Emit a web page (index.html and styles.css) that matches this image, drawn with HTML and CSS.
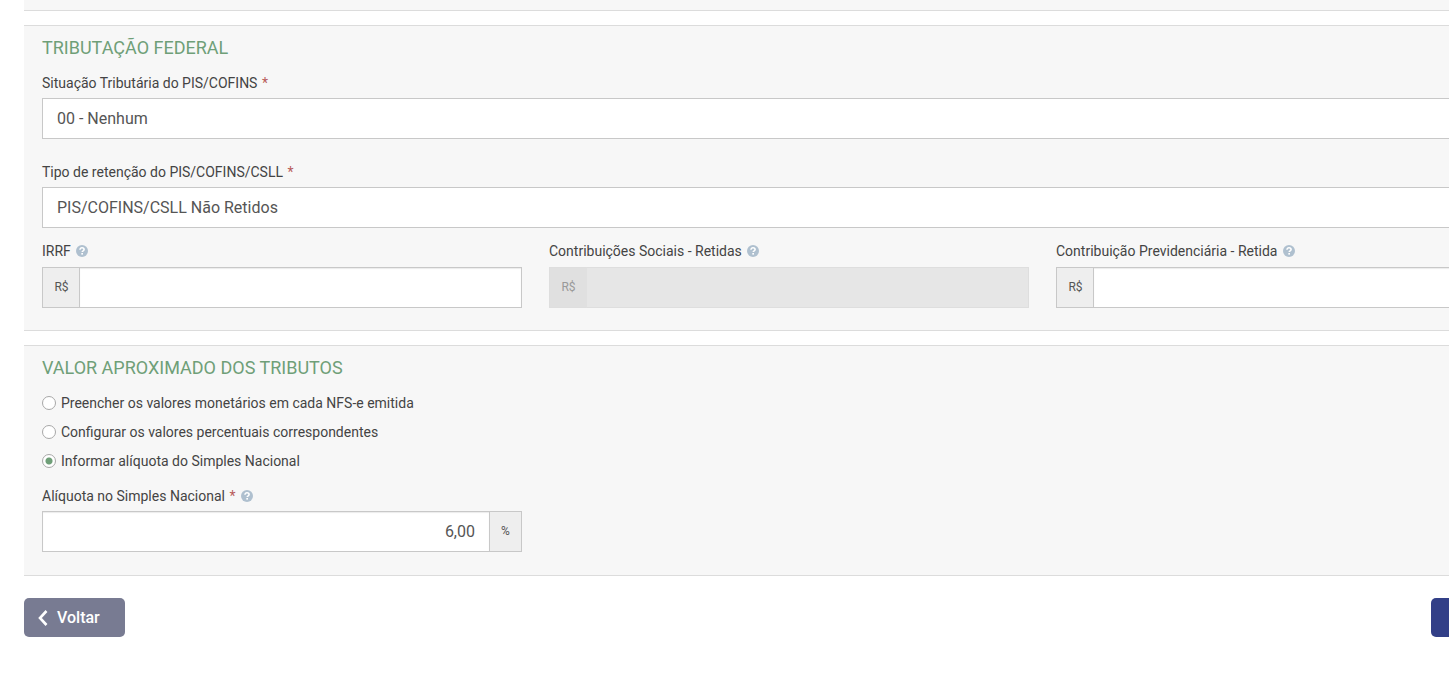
FILE: index.html
```html
<!DOCTYPE html>
<html lang="pt-BR">
<head>
<meta charset="utf-8">
<title>Tributação</title>
<link rel="stylesheet" href="styles.css">
</head>
<body>
<svg class="sprite" aria-hidden="true">
  <symbol id="help" viewBox="0 0 12 12">
    <circle cx="6" cy="6" r="6" fill="#afc0cf"/>
    <path d="M4 4.700C4 3.400 4.900 2.800 6 2.800s2.100.700 2.100 1.800C8.100 5.800 6.200 5.800 6.200 7.100" fill="none" stroke="#fff" stroke-width="1.600"/>
    <rect x="5.300" y="8" width="1.700" height="1.600" fill="#fff"/>
  </symbol>
</svg>
<form class="page">
  <section class="panel panel-previous"></section>

  <section class="panel">
    <h2 class="title">TRIBUTAÇÃO FEDERAL</h2>
    <div class="field">
      <label class="label" for="situacao">Situação Tributária do PIS/COFINS <span class="required">*</span></label>
      <select class="control" id="situacao"><option>00 - Nenhum</option></select>
    </div>
    <div class="field field-spaced">
      <label class="label" for="retencao">Tipo de retenção do PIS/COFINS/CSLL <span class="required">*</span></label>
      <select class="control" id="retencao"><option>PIS/COFINS/CSLL Não Retidos</option></select>
    </div>
    <div class="columns">
      <div class="field field-money">
        <label class="label" for="irrf">IRRF <svg class="help"><use href="#help"/></svg></label>
        <div class="group"><span class="addon">R$</span><input class="control" id="irrf" type="text"></div>
      </div>
      <div class="field field-money">
        <label class="label" for="sociais">Contribuições Sociais - Retidas <svg class="help"><use href="#help"/></svg></label>
        <div class="group group-disabled"><span class="addon">R$</span><input class="control" id="sociais" type="text" disabled></div>
      </div>
      <div class="field field-money">
        <label class="label" for="previdencia">Contribuição Previdenciária - Retida <svg class="help"><use href="#help"/></svg></label>
        <div class="group"><span class="addon">R$</span><input class="control" id="previdencia" type="text"></div>
      </div>
    </div>
  </section>

  <section class="panel panel-total">
    <h2 class="title">VALOR APROXIMADO DOS TRIBUTOS</h2>
    <div class="options">
      <label class="option"><input class="radio" type="radio" name="valor">Preencher os valores monetários em cada NFS-e emitida</label>
      <label class="option"><input class="radio" type="radio" name="valor">Configurar os valores percentuais correspondentes</label>
      <label class="option"><input class="radio" type="radio" name="valor" checked>Informar alíquota do Simples Nacional</label>
    </div>
    <div class="columns">
      <div class="field">
        <label class="label" for="aliquota">Alíquota no Simples Nacional <span class="required">*</span> <svg class="help"><use href="#help"/></svg></label>
        <div class="group"><input class="control control-number" id="aliquota" type="text" value="6,00"><span class="addon addon-end">%</span></div>
      </div>
    </div>
  </section>

  <div class="actions">
    <button class="button button-back" type="button">
      <svg class="chevron" viewBox="0 0 10 16"><path d="M8.500 1L2 8l6.500 7" fill="none" stroke="#fff" stroke-width="2.600"/></svg>Voltar
    </button>
    <button class="button button-next" type="submit" aria-label="Avançar"></button>
  </div>
</form>
</body>
</html>
```
FILE: styles.css
```css
* {
  box-sizing: border-box;
}

body {
  margin: 0;
  overflow: hidden;
  background: #fff;
  color: #444;
  font: 14px/20px Roboto, "Liberation Sans", sans-serif;
}

.sprite {
  position: absolute;
  width: 0;
  height: 0;
}

/* The form runs past the right edge of the window. */
.page {
  margin: 0 -105px 0 24px;
}

.panel {
  margin-bottom: 14px;
  padding: 10px 18px 22px;
  border: solid #dcdcdc;
  border-width: 1px 0;
  background: #f7f7f7;
}

.panel-previous {
  height: 11px;
  padding: 0;
  border-top: 0;
}

.panel-total {
  margin-bottom: 22px;
  padding-bottom: 23px;
}

.title {
  margin: 0 0 13px;
  color: #6f9f78;
  font-size: 18px;
  font-weight: 400;
  line-height: 24px;
}

.field {
  display: flex;
  flex-direction: column;
  gap: 5px;
}

.field-spaced {
  margin: 23px 0 13px;
}

.field-money {
  gap: 6px;
}

.columns {
  display: grid;
  grid-template-columns: repeat(3, 1fr);
  gap: 27px;
}

.required {
  margin-left: 1px;
  color: #b85c5a;
}

.help {
  width: 12px;
  height: 12px;
  margin-left: 2px;
  vertical-align: -1px;
}

.control {
  appearance: none;
  width: 100%;
  min-width: 0;
  height: 41px;
  margin: 0;
  padding: 0 14px;
  border: 1px solid #c8c8c8;
  border-radius: 0;
  background: #fff;
  color: #555;
  font: 16px/20px Roboto, "Liberation Sans", sans-serif;
}

.control-number {
  text-align: right;
}

.group {
  display: flex;
}

.group .control {
  flex: 1;
  box-shadow: inset 0 1px 1px #ececec;
}

.addon {
  display: flex;
  align-items: center;
  justify-content: center;
  width: 38px;
  padding-bottom: 2px;
  border: 1px solid #c8c8c8;
  border-right: 0;
  background: #eee;
  color: #555;
  font-size: 12px;
}

.group .addon + .control {
  margin-left: -1px;
}

.addon-end {
  width: 32px;
  border-right: 1px solid #c8c8c8;
  border-left: 0;
}

.group-disabled .control {
  border-color: #dedede;
  border-left-color: #e0e0e0;
  background: #e6e6e6;
  box-shadow: none;
}

.group-disabled .addon {
  border-color: #dedede;
  background: #e0e0e0;
  color: #999;
}

.options {
  display: flex;
  flex-direction: column;
  align-items: flex-start;
  gap: 9px;
  margin-bottom: 15px;
}

.option {
  display: flex;
  align-items: center;
  gap: 5px;
}

.radio {
  appearance: none;
  width: 14px;
  height: 14px;
  margin: 0;
  border: 1px solid #a8a8a8;
  border-radius: 50%;
  background: #fff;
}

.radio:checked {
  background: radial-gradient(circle, #6f9f78 3px, #fff 4px);
}

.actions {
  display: flex;
  justify-content: space-between;
}

.button {
  display: flex;
  align-items: center;
  height: 39px;
  border: 0;
  border-radius: 5px;
  color: #fff;
  font: 500 16px/20px Roboto, "Liberation Sans", sans-serif;
}

.button-back {
  gap: 9px;
  width: 101px;
  padding: 0 14px;
  background: #787b92;
}

.button-next {
  width: 123px;
  background: #323f87;
}

.chevron {
  width: 10px;
  height: 16px;
}
```
